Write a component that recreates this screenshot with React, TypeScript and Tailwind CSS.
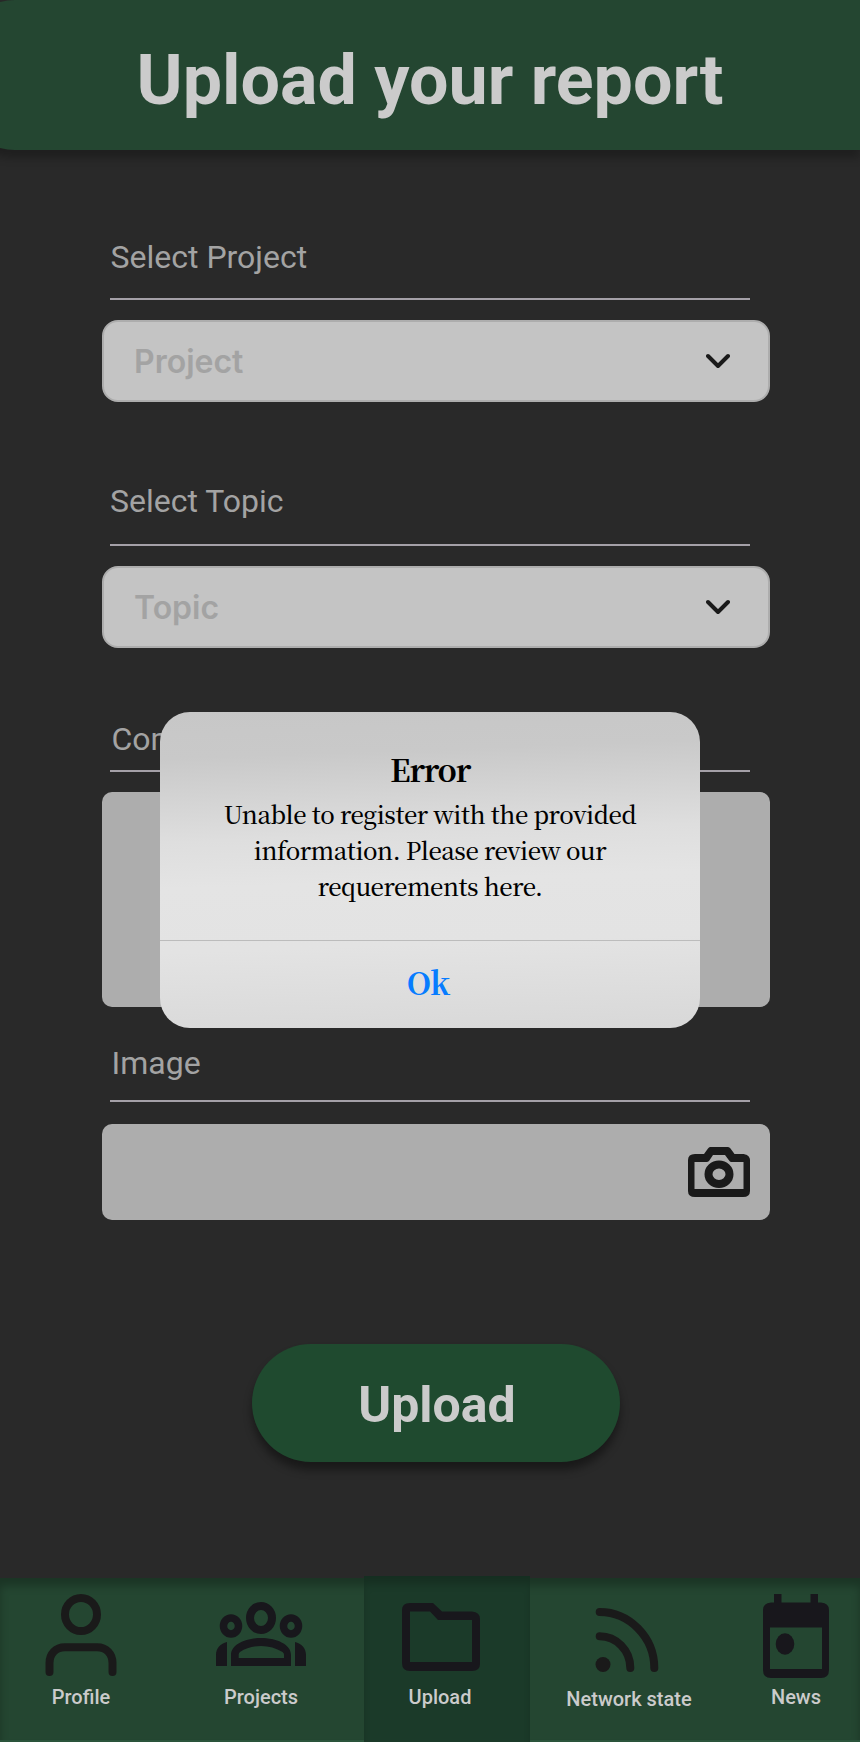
import type { ReactNode } from "react";

function FieldLabel({ children, className }: { children: ReactNode; className: string }) {
  return (
    <div className={`flex items-end border-b-2 border-[#a4a0a7] ml-[110px] w-[640px] ${className}`}>
      <span className="text-[32px] leading-[40px] whitespace-nowrap text-[#a3a3a3]">{children}</span>
    </div>
  );
}

function SelectBox({ placeholder }: { placeholder: string }) {
  return (
    <button className="mt-5 ml-[102px] flex h-[82px] w-[668px] items-center justify-between rounded-2xl border-2 border-[#adadad] bg-[#c4c4c4] pr-[38px] pl-[30px]">
      <span className="pt-0.5 font-['Inter'] text-[32px] leading-10 font-semibold text-[#a3a3a3]">{placeholder}</span>
      <svg width="24" height="16" viewBox="0 0 24 16" fill="none" stroke="#1a1a1a" strokeWidth="4" strokeLinecap="round" strokeLinejoin="round">
        <path d="M2 3L12 13L22 3" />
      </svg>
    </button>
  );
}

function CameraIcon() {
  return (
    <svg width="62" height="50" viewBox="0 0 62 50" fill="#1a1a1a" fillRule="evenodd">
      <path d="M22 0H40Q41.5 0 42.500 1.500L46.500 7H54.500C58 7 62 9 62 13V44Q62 50 55 50H7Q0 50 0 44V13Q0 7 7 7H16L20 1.500Q21 0 22 0ZM25 8L21 14Q20 15 18.500 15H6.500V42H55.500V15H43.500Q42 15 41.500 14L37 8Z" />
      <path d="M31 13.500A14.500 13.700 0 1 1 31 40.900A14.500 13.700 0 1 1 31 13.500ZM31 21.500A6.500 5.700 0 1 0 31 32.900A6.500 5.700 0 1 0 31 21.500Z" />
    </svg>
  );
}

function NavIcon({ children }: { children: ReactNode }) {
  return (
    <svg className="block shrink-0" width="92" height="92" viewBox="0 0 92 92">
      {children}
    </svg>
  );
}

function NavItem({ label, className, labelClass, children }: { label: string; className: string; labelClass?: string; children: ReactNode }) {
  return (
    <div className={`flex flex-col items-center ${className}`}>
      <NavIcon>{children}</NavIcon>
      <span className={`text-[20px] leading-6 font-medium whitespace-nowrap text-[#cbcbcb] ${labelClass ?? "mt-[3px]"}`}>{label}</span>
    </div>
  );
}

function BottomNav() {
  return (
    <nav className="flex h-[164px] w-[860px] border-b-2 border-[#2a543b] bg-[#244631] shadow-[inset_0_8px_8px_rgba(0,0,0,0.25)]">
      <NavItem label="Profile" className="w-[162px] pt-3">
        <g fill="none" stroke="#1a1a1a" strokeWidth="8" strokeLinecap="round">
          <ellipse cx="46" cy="24.500" rx="16" ry="16.500" />
          <path d="M14.500 82V73C14.500 64 20.500 57.300 30 57.300H62C71.500 57.300 77.500 64 77.500 73V82" />
        </g>
      </NavItem>
      <NavItem label="Projects" className="w-[202px] pt-3 pr-1">
        <g fill="none" stroke="#18171c" strokeWidth="8">
          <ellipse cx="46" cy="28" rx="11" ry="12" />
          <ellipse cx="16" cy="36" rx="7.500" ry="8" strokeWidth="7.500" />
          <ellipse cx="76" cy="36" rx="7.500" ry="8" strokeWidth="7.500" />
        </g>
        <g fill="#18171c" fillRule="evenodd">
          <path d="M16 76V65C16 54 31 48 46 48S76 54 76 65V76ZM23.700 68H69V64.500Q69 63 67.500 62C61 58 54 56 46 56S31 58 25 62Q23.700 63 23.700 64.500Z" />
          <path d="M1 76V65C1 58 5.500 53.500 12 52V76ZM80 76V52C86.500 53.500 91 58 91 65V76Z" />
        </g>
      </NavItem>
      <NavItem label="Upload" className="-mt-0.5 h-[166px] w-[166px] bg-[#1b3a29] pt-3.5 pr-3 shadow-[inset_0_10px_8px_-2px_rgba(0,0,0,0.2)]" labelClass="mt-[3px] -ml-0.5">
        <path fill="#18171c" fillRule="evenodd" d="M15 13H38L47 21.500H77Q85 22 85 29V74Q85 81 77 81H15Q7 81 7 73V20Q7 13 15 13ZM15 21.500V72H77V30H43L35 21.500Z" />
      </NavItem>
      <NavItem label="Network state" className="w-[198px] pt-3" labelClass="mt-[5px]">
        <g fill="none" stroke="#1a1a1a" strokeWidth="8" strokeLinecap="round">
          <path d="M16.700 22C46 22 71.300 47 71.300 78" />
          <path d="M16.700 46.300C33 46.300 47.300 60 47.300 78" />
        </g>
        <circle cx="20" cy="74.500" r="7.500" fill="#1a1a1a" />
      </NavItem>
      <NavItem label="News" className="w-[132px] pt-3 pl-1">
        <path fill="#18171c" fillRule="evenodd" d="M24 4H31.500V12.500H60.500V4H68V12.500H71Q79 13 79 20V80Q79 88 71 88H21Q13 88 13 80V20Q13 13 21 12.500H24ZM20 37.500V79H72V37.500Z" />
        <ellipse cx="35" cy="54" rx="9.300" ry="10.700" fill="#18171c" />
      </NavItem>
    </nav>
  );
}

function ErrorDialog() {
  return (
    <div
      role="alertdialog"
      className="absolute top-[712px] left-[160px] flex h-[316px] w-[540px] flex-col rounded-[30px] bg-[linear-gradient(178deg,#c7c7c7_0%,#c9c9c9_14%,#dedede_39%,#e4e4e4_53%,#e3e3e3_72%,#d8d8d8_100%)] text-center font-['Noto_Serif_CJK_SC','Liberation_Serif',serif] text-black"
    >
      <div className="h-[228px] pt-[37px]">
        <h2 className="text-[31px] leading-10 font-bold tracking-[-1.2px]">Error</h2>
        <p className="mt-[7px] text-[24px] leading-9 font-medium tracking-[-0.45px] whitespace-nowrap">
          Unable to register with the provided
          <br />
          information. Please review our
          <br />
          requerements here.
        </p>
      </div>
      <button className="flex h-[88px] items-center justify-center border-t border-[#bcbcbc] pr-1 pb-[5px] text-[31px] font-bold tracking-[-1px] text-[#077cff]">Ok</button>
    </div>
  );
}

export default function App() {
  return (
    <div className="relative flex h-[1742px] w-[860px] flex-col overflow-hidden bg-[#292929] font-['Roboto',sans-serif]">
      <header className="-ml-[45px] flex h-[150px] w-[905px] shrink-0 items-center justify-center rounded-l-[60px] bg-[#244631] pt-[10px] pl-[45px] shadow-[0_8px_8px_rgba(0,0,0,0.25)]">
        <h1 className="text-[70px] leading-20 font-bold whitespace-nowrap text-[#cbcbcb]">Upload your report</h1>
      </header>

      <main className="h-[1428px] shrink-0">
        <FieldLabel className="h-[150px] pb-[21px] pl-[0.5px]">Select Project</FieldLabel>
        <SelectBox placeholder="Project" />
        <FieldLabel className="h-[144px] pb-[23px]">Select Topic</FieldLabel>
        <SelectBox placeholder="Topic" />
        <FieldLabel className="h-[124px] pb-[11px] pl-[1.5px]">Comments</FieldLabel>
        <div className="mt-5 ml-[102px] h-[215px] w-[668px] rounded-[10px] bg-[#adadad]" />
        <FieldLabel className="h-[95px] pb-[17px] pl-[1.5px]">Image</FieldLabel>
        <div className="mt-[22px] ml-[102px] flex h-24 w-[668px] items-center justify-end rounded-[10px] bg-[#adadad] pr-5">
          <CameraIcon />
        </div>
        <button className="mt-[124px] ml-[252px] flex h-[118px] w-[368px] items-center justify-center rounded-full bg-[#1f4a2f] pt-1 pl-0.5 text-[50px] font-bold text-[#cbcbcb] shadow-[0_8px_8px_rgba(0,0,0,0.4)]">
          Upload
        </button>
      </main>

      <BottomNav />
      <ErrorDialog />
    </div>
  );
}
